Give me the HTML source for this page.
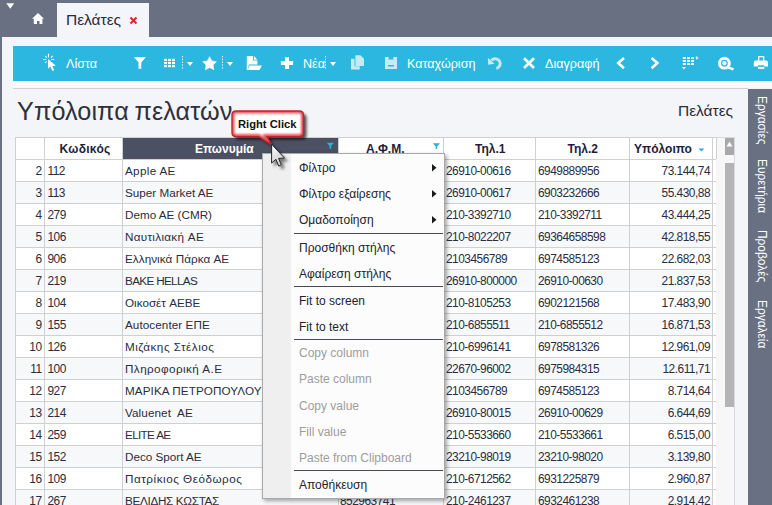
<!DOCTYPE html>
<html><head><meta charset="utf-8"><title>Πελάτες</title>
<style>
*{box-sizing:border-box}
html,body{margin:0;padding:0}
body{width:772px;height:505px;overflow:hidden;position:relative;background:#f4f5f8;font-family:"Liberation Sans",sans-serif;color:#2a2c3c}
.a{position:absolute}
.tb{color:#fff;font-size:12.6px;white-space:nowrap;line-height:15px}
.cell{position:absolute;font-size:11.7px;white-space:nowrap;line-height:14px;color:#2b2d3e}
.hd{position:absolute;font-size:12px;font-weight:bold;white-space:nowrap;line-height:14px;color:#1f1e3a}
.mi{position:absolute;left:299px;font-size:12px;white-space:nowrap;line-height:14px;color:#22232e}
.mi.dis{color:#9d9d9d}
.num{letter-spacing:-0.5px;font-size:11.9px}
.sep{position:absolute;left:294px;width:149px;height:1px;background:#4a4b52}
.side{position:absolute;left:756px;writing-mode:vertical-rl;font-size:11.9px;color:#fff;white-space:nowrap;line-height:11px}
</style></head><body>

<div class="a" style="left:0;top:0;width:772px;height:37px;background:#687082"></div>
<div class="a" style="left:0;top:37px;width:2px;height:468px;background:#687082"></div>
<svg class="a" style="left:5px;top:2px" width="11" height="8"><path d="M1.3 1.3 H9.2 L5.25 6.7 Z" fill="#fff"/></svg>
<svg class="a" style="left:31px;top:12px" width="14" height="13"><path d="M7 1 L1 6.8 H2.8 V12 H6 V9 H8.5 V12 H11.4 V6.8 H13 Z" fill="#fff"/></svg>
<div class="a" style="left:57px;top:3px;width:92px;height:35px;background:#f4f5f8"></div>
<div class="a" style="left:66px;top:11px;font-size:15.5px;line-height:17px;color:#2a2c3c">Πελάτες</div>
<svg class="a" style="left:129px;top:16px" width="9" height="9"><path d="M1.5 1.5 L7.5 7.5 M7.5 1.5 L1.5 7.5" stroke="#e0252b" stroke-width="2"/></svg>
<div class="a" style="left:13px;top:46px;width:759px;height:35px;background:#2bb7e0"></div>
<div class="a" style="left:13px;top:81px;width:759px;height:7px;background:#f9fafb"></div>
<div class="a" style="left:13px;top:88px;width:735px;height:1px;background:#cdd0d6"></div>
<svg class="a" style="left:0;top:0" width="772" height="90">
<g fill="#fff">
 <path d="M48 59 L48 68.8 L50.4 66.6 L52.3 71 L54.2 70.2 L52.4 65.9 L55.8 65.7 Z"/>
</g>
<g stroke="#fff" stroke-width="1.1" fill="none">
 <path d="M48.5 53.8 V57.4 M43 59.5 H46.2 M51 59.5 H54.2 M45.2 56 L46.8 57.6 M52.6 56 L51 57.6 M45.2 62.8 L46.6 61.4"/>
</g>
<path d="M133.9 56.9 H145.9 L141.3 62.5 V68.8 H138.5 V62.5 Z" fill="#fff"/>
<g fill="#fff">
 <rect x="164" y="58.8" width="3" height="2.2"/><rect x="168" y="58.8" width="3" height="2.2"/><rect x="172" y="58.8" width="3" height="2.2"/>
 <rect x="164" y="61.9" width="3" height="2.2"/><rect x="168" y="61.9" width="3" height="2.2"/><rect x="172" y="61.9" width="3" height="2.2"/>
 <rect x="164" y="65" width="3" height="2.2"/><rect x="168" y="65" width="3" height="2.2"/><rect x="172" y="65" width="3" height="2.2"/>
</g>
<g stroke="#fff" stroke-width="1" stroke-dasharray="1.4 1.4" opacity="0.9">
 <path d="M182.5 56 V70 M222.5 56 V70 M325.5 56 V70"/>
</g>
<g fill="#fff">
 <path d="M187 62 H193 L190 66 Z M227 62 H233 L230 66 Z M330 62 H336 L333 66 Z"/>
 <path d="M209.6 56.7 L211.8 60.9 L216.4 61.7 L213.1 65.0 L213.8 69.7 L209.6 67.6 L205.4 69.7 L206.1 65.0 L202.8 61.7 L207.4 60.9 Z" stroke="#fff" stroke-width="0.6" stroke-linejoin="round"/>
 <path d="M246.8 56 H253 V60.6 H257.4 V64.6 H249.2 L247.9 67.5 V70 H246.8 Z"/><path d="M253.9 56 L257.4 59.7 H253.9 Z"/>
 <path d="M249.6 65.6 H262 L259.4 70 H247.3 Z"/>
 <path d="M285.1 57 H289 V61 H293.1 V64.9 H289 V69 H285.1 V64.9 H280.9 V61 H285.1 Z"/>
</g>
<g fill="rgba(255,255,255,0.72)">
 <path d="M351 58.7 H354.5 V66.3 H359.7 V69.6 H351 Z"/>
 <path d="M355.4 55.3 H360.5 L364 58.8 V66.1 H355.4 Z"/>
 <path d="M385 57 H388.6 V59.6 H393.4 V57 H397 V69 H385 Z M388 65 V66.6 H394 V65 Z" fill-rule="evenodd"/>
</g>
<path d="M491.4 60.4 A5 5 0 1 1 496.4 68.5" stroke="rgba(255,255,255,0.72)" stroke-width="3" fill="none"/>
<path d="M487.8 57.8 L488.2 64.8 L494.6 63.8 Z" fill="rgba(255,255,255,0.72)"/>
<path d="M524 58.2 L534 68 M534 58.2 L524 68" stroke="#fff" stroke-width="2.7"/>
<path d="M624 58 L618.2 63.1 L624 68.2 M651.6 58 L657.4 63.1 L651.6 68.2" stroke="#fff" stroke-width="2.6" fill="none"/>
<g fill="#fff">
 <rect x="682.8" y="57" width="3" height="2"/><rect x="687" y="57" width="3" height="2"/><rect x="691" y="57" width="3" height="2"/>
 <rect x="682.8" y="60" width="3" height="2"/><rect x="687" y="60" width="3" height="2"/><rect x="691" y="60" width="3" height="2"/>
 <rect x="682.8" y="63" width="3" height="2"/><rect x="687" y="63" width="3" height="2"/><rect x="691" y="63" width="3" height="2"/>
 <path d="M681.9 67 H685.9 L683.9 69.4 Z M695.9 56 L698.6 57.9 L695.9 59.8 Z"/>
</g>
<circle cx="724.4" cy="63.2" r="4.9" stroke="#fff" stroke-width="3" fill="none"/>
<circle cx="724.4" cy="63.2" r="2.1" fill="#fff"/>
<path d="M728.2 67.3 L733.5 69.4" stroke="#fff" stroke-width="2.4"/>
<g fill="#fff">
 <path d="M758 56 H764.3 V61 H763 V57.3 H759.3 V61 H758 Z"/>
 <path d="M755.8 60.4 H766 Q768 60.4 768 62.4 V66.6 H764.3 V65.3 H758 V66.6 H753.8 V62.4 Q753.8 60.4 755.8 60.4 Z"/>
 <rect x="758" y="66.8" width="6.3" height="2.1"/>
</g>
</svg>
<div class="a tb" style="left:66px;top:57px">Λίστα</div>
<div class="a tb" style="left:303px;top:57px">Νέα</div>
<div class="a tb" style="left:407px;top:57px">Καταχώριση</div>
<div class="a tb" style="left:545px;top:57px">Διαγραφή</div>
<div class="a" style="left:17px;top:97px;font-size:25.2px;word-spacing:-1.5px;letter-spacing:0.1px;line-height:28px;color:#2e3040;white-space:nowrap">Υπόλοιπα πελατών</div>
<div class="a" style="left:678px;top:101.5px;font-size:15.5px;line-height:17px;color:#2a2c3c">Πελάτες</div>
<div class="a" style="left:748px;top:89px;width:24px;height:416px;background:#687082"></div>
<div class="side" style="top:96px">Εργασίες</div>
<div class="side" style="top:159px">Ευρετήρια</div>
<div class="side" style="top:230px">Προβολές</div>
<div class="side" style="top:300px">Εργαλεία</div>
<div class="a" style="left:15px;top:137px;width:701px;height:368px;background:#fff"></div>
<div class="a" style="left:16px;top:181px;width:696px;height:22px;background:#f7f8fa"></div>
<div class="a" style="left:16px;top:225px;width:696px;height:22px;background:#f7f8fa"></div>
<div class="a" style="left:16px;top:269px;width:696px;height:22px;background:#f7f8fa"></div>
<div class="a" style="left:16px;top:313px;width:696px;height:22px;background:#f7f8fa"></div>
<div class="a" style="left:16px;top:357px;width:696px;height:22px;background:#f7f8fa"></div>
<div class="a" style="left:16px;top:401px;width:696px;height:22px;background:#f7f8fa"></div>
<div class="a" style="left:16px;top:445px;width:696px;height:22px;background:#f7f8fa"></div>
<div class="a" style="left:16px;top:489px;width:696px;height:22px;background:#f7f8fa"></div>
<div class="a" style="left:122px;top:137px;width:216px;height:22px;background:#4b5063"></div>
<div class="a" style="left:15px;top:137px;width:697px;height:1px;background:#cfd0d2"></div>
<div class="a" style="left:712px;top:137px;width:4px;height:1px;background:#cfd0d2"></div>
<div class="a" style="left:15px;top:159px;width:697px;height:1px;background:#cfd0d2"></div>
<div class="a" style="left:712px;top:159px;width:4px;height:1px;background:#cfd0d2"></div>
<div class="a" style="left:15px;top:181px;width:697px;height:1px;background:#cfd0d2"></div>
<div class="a" style="left:712px;top:181px;width:4px;height:1px;background:#cfd0d2"></div>
<div class="a" style="left:15px;top:203px;width:697px;height:1px;background:#cfd0d2"></div>
<div class="a" style="left:712px;top:203px;width:4px;height:1px;background:#cfd0d2"></div>
<div class="a" style="left:15px;top:225px;width:697px;height:1px;background:#cfd0d2"></div>
<div class="a" style="left:712px;top:225px;width:4px;height:1px;background:#cfd0d2"></div>
<div class="a" style="left:15px;top:247px;width:697px;height:1px;background:#cfd0d2"></div>
<div class="a" style="left:712px;top:247px;width:4px;height:1px;background:#cfd0d2"></div>
<div class="a" style="left:15px;top:269px;width:697px;height:1px;background:#cfd0d2"></div>
<div class="a" style="left:712px;top:269px;width:4px;height:1px;background:#cfd0d2"></div>
<div class="a" style="left:15px;top:291px;width:697px;height:1px;background:#cfd0d2"></div>
<div class="a" style="left:712px;top:291px;width:4px;height:1px;background:#cfd0d2"></div>
<div class="a" style="left:15px;top:313px;width:697px;height:1px;background:#cfd0d2"></div>
<div class="a" style="left:712px;top:313px;width:4px;height:1px;background:#cfd0d2"></div>
<div class="a" style="left:15px;top:335px;width:697px;height:1px;background:#cfd0d2"></div>
<div class="a" style="left:712px;top:335px;width:4px;height:1px;background:#cfd0d2"></div>
<div class="a" style="left:15px;top:357px;width:697px;height:1px;background:#cfd0d2"></div>
<div class="a" style="left:712px;top:357px;width:4px;height:1px;background:#cfd0d2"></div>
<div class="a" style="left:15px;top:379px;width:697px;height:1px;background:#cfd0d2"></div>
<div class="a" style="left:712px;top:379px;width:4px;height:1px;background:#cfd0d2"></div>
<div class="a" style="left:15px;top:401px;width:697px;height:1px;background:#cfd0d2"></div>
<div class="a" style="left:712px;top:401px;width:4px;height:1px;background:#cfd0d2"></div>
<div class="a" style="left:15px;top:423px;width:697px;height:1px;background:#cfd0d2"></div>
<div class="a" style="left:712px;top:423px;width:4px;height:1px;background:#cfd0d2"></div>
<div class="a" style="left:15px;top:445px;width:697px;height:1px;background:#cfd0d2"></div>
<div class="a" style="left:712px;top:445px;width:4px;height:1px;background:#cfd0d2"></div>
<div class="a" style="left:15px;top:467px;width:697px;height:1px;background:#cfd0d2"></div>
<div class="a" style="left:712px;top:467px;width:4px;height:1px;background:#cfd0d2"></div>
<div class="a" style="left:15px;top:489px;width:697px;height:1px;background:#cfd0d2"></div>
<div class="a" style="left:712px;top:489px;width:4px;height:1px;background:#cfd0d2"></div>
<div class="a" style="left:15px;top:137px;width:1px;height:368px;background:#cfd0d2"></div>
<div class="a" style="left:44px;top:137px;width:1px;height:368px;background:#cfd0d2"></div>
<div class="a" style="left:122px;top:137px;width:1px;height:368px;background:#cfd0d2"></div>
<div class="a" style="left:338px;top:137px;width:1px;height:368px;background:#cfd0d2"></div>
<div class="a" style="left:443px;top:137px;width:1px;height:368px;background:#cfd0d2"></div>
<div class="a" style="left:535px;top:137px;width:1px;height:368px;background:#cfd0d2"></div>
<div class="a" style="left:629px;top:137px;width:1px;height:368px;background:#cfd0d2"></div>
<div class="a" style="left:712px;top:137px;width:1px;height:368px;background:#cfd0d2"></div>
<div class="a" style="left:716px;top:137px;width:1px;height:22px;background:#cfd0d2"></div>
<div class="hd" style="left:59.5px;top:142px;letter-spacing:0.3px">Κωδικός</div>
<div class="hd" style="left:195px;top:142px;color:#fff">Επωνυμία</div>
<div class="hd" style="left:366px;top:142px">Α.Φ.Μ.</div>
<div class="hd" style="left:475px;top:142px">Τηλ.1</div>
<div class="hd" style="left:567.5px;top:142px">Τηλ.2</div>
<div class="hd" style="left:634px;top:142px">Υπόλοιπο</div>
<div class="cell num" style="right:730.5px;top:164px">2</div>
<div class="cell num" style="left:47.5px;top:164px">112</div>
<div class="cell" style="left:125px;top:164px;letter-spacing:0.314px">Apple AE</div>
<div class="cell num" style="left:446px;top:164px">26910-00616</div>
<div class="cell num" style="left:538px;top:164px">6949889956</div>
<div class="cell num" style="right:62px;top:164px">73.144,74</div>
<div class="cell num" style="right:730.5px;top:186px">3</div>
<div class="cell num" style="left:47.5px;top:186px">113</div>
<div class="cell" style="left:125px;top:186px;letter-spacing:0px">Super Market AE</div>
<div class="cell num" style="left:446px;top:186px">26910-00617</div>
<div class="cell num" style="left:538px;top:186px">6903232666</div>
<div class="cell num" style="right:62px;top:186px">55.430,88</div>
<div class="cell num" style="right:730.5px;top:208px">4</div>
<div class="cell num" style="left:47.5px;top:208px">279</div>
<div class="cell" style="left:125px;top:208px;letter-spacing:0px">Demo AE (CMR)</div>
<div class="cell num" style="left:446px;top:208px">210-3392710</div>
<div class="cell num" style="left:538px;top:208px">210-3392711</div>
<div class="cell num" style="right:62px;top:208px">43.444,25</div>
<div class="cell num" style="right:730.5px;top:230px">5</div>
<div class="cell num" style="left:47.5px;top:230px">106</div>
<div class="cell" style="left:125px;top:230px;letter-spacing:0.292px">Ναυτιλιακή AE</div>
<div class="cell num" style="left:446px;top:230px">210-8022207</div>
<div class="cell num" style="left:538px;top:230px">69364658598</div>
<div class="cell num" style="right:62px;top:230px">42.818,55</div>
<div class="cell num" style="right:730.5px;top:252px">6</div>
<div class="cell num" style="left:47.5px;top:252px">906</div>
<div class="cell" style="left:125px;top:252px;letter-spacing:0.056px">Ελληνικά Πάρκα AE</div>
<div class="cell num" style="left:446px;top:252px">2103456789</div>
<div class="cell num" style="left:538px;top:252px">6974585123</div>
<div class="cell num" style="right:62px;top:252px">22.682,03</div>
<div class="cell num" style="right:730.5px;top:274px">7</div>
<div class="cell num" style="left:47.5px;top:274px">219</div>
<div class="cell" style="left:125px;top:274px;letter-spacing:-0.65px">BAKE HELLAS</div>
<div class="cell num" style="left:446px;top:274px">26910-800000</div>
<div class="cell num" style="left:538px;top:274px">26910-00630</div>
<div class="cell num" style="right:62px;top:274px">21.837,53</div>
<div class="cell num" style="right:730.5px;top:296px">8</div>
<div class="cell num" style="left:47.5px;top:296px">104</div>
<div class="cell" style="left:125px;top:296px;letter-spacing:0px">Οικοσέτ AEBE</div>
<div class="cell num" style="left:446px;top:296px">210-8105253</div>
<div class="cell num" style="left:538px;top:296px">6902121568</div>
<div class="cell num" style="right:62px;top:296px">17.483,90</div>
<div class="cell num" style="right:730.5px;top:318px">9</div>
<div class="cell num" style="left:47.5px;top:318px">155</div>
<div class="cell" style="left:125px;top:318px;letter-spacing:0.077px">Autocenter ΕΠΕ</div>
<div class="cell num" style="left:446px;top:318px">210-6855511</div>
<div class="cell num" style="left:538px;top:318px">210-6855512</div>
<div class="cell num" style="right:62px;top:318px">16.871,53</div>
<div class="cell num" style="right:730.5px;top:340px">10</div>
<div class="cell num" style="left:47.5px;top:340px">126</div>
<div class="cell" style="left:125px;top:340px;letter-spacing:0.514px">Μιζάκης Στέλιος</div>
<div class="cell num" style="left:446px;top:340px">210-6996141</div>
<div class="cell num" style="left:538px;top:340px">6978581326</div>
<div class="cell num" style="right:62px;top:340px">12.961,09</div>
<div class="cell num" style="right:730.5px;top:362px">11</div>
<div class="cell num" style="left:47.5px;top:362px">100</div>
<div class="cell" style="left:125px;top:362px;letter-spacing:0.421px">Πληροφορική Α.Ε</div>
<div class="cell num" style="left:446px;top:362px">22670-96002</div>
<div class="cell num" style="left:538px;top:362px">6975984315</div>
<div class="cell num" style="right:62px;top:362px">12.611,71</div>
<div class="cell num" style="right:730.5px;top:384px">12</div>
<div class="cell num" style="left:47.5px;top:384px">927</div>
<div class="cell" style="left:125px;top:384px;letter-spacing:0.076px">ΜΑΡΙΚΑ ΠΕΤΡΟΠΟΥΛΟΥ</div>
<div class="cell num" style="left:446px;top:384px">2103456789</div>
<div class="cell num" style="left:538px;top:384px">6974585123</div>
<div class="cell num" style="right:62px;top:384px">8.714,64</div>
<div class="cell num" style="right:730.5px;top:406px">13</div>
<div class="cell num" style="left:47.5px;top:406px">214</div>
<div class="cell" style="left:125px;top:406px;letter-spacing:0.091px">Valuenet&nbsp; AE</div>
<div class="cell num" style="left:446px;top:406px">26910-80015</div>
<div class="cell num" style="left:538px;top:406px">26910-00629</div>
<div class="cell num" style="right:62px;top:406px">6.644,69</div>
<div class="cell num" style="right:730.5px;top:428px">14</div>
<div class="cell num" style="left:47.5px;top:428px">259</div>
<div class="cell" style="left:125px;top:428px;letter-spacing:-0.657px">ELITE AE</div>
<div class="cell num" style="left:446px;top:428px">210-5533660</div>
<div class="cell num" style="left:538px;top:428px">210-5533661</div>
<div class="cell num" style="right:62px;top:428px">6.515,00</div>
<div class="cell num" style="right:730.5px;top:450px">15</div>
<div class="cell num" style="left:47.5px;top:450px">152</div>
<div class="cell" style="left:125px;top:450px;letter-spacing:0px">Deco Sport AE</div>
<div class="cell num" style="left:446px;top:450px">23210-98019</div>
<div class="cell num" style="left:538px;top:450px">23210-98020</div>
<div class="cell num" style="right:62px;top:450px">3.139,80</div>
<div class="cell num" style="right:730.5px;top:472px">16</div>
<div class="cell num" style="left:47.5px;top:472px">109</div>
<div class="cell" style="left:125px;top:472px;letter-spacing:0.518px">Πατρίκιος Θεόδωρος</div>
<div class="cell num" style="left:446px;top:472px">210-6712562</div>
<div class="cell num" style="left:538px;top:472px">6931225879</div>
<div class="cell num" style="right:62px;top:472px">2.960,87</div>
<div class="cell num" style="right:730.5px;top:494px">17</div>
<div class="cell num" style="left:47.5px;top:494px">267</div>
<div class="cell" style="left:125px;top:494px;letter-spacing:-0.315px">ΒΕΛΙΔΗΣ ΚΩΣΤΑΣ</div>
<div class="cell num" style="left:340px;top:494px">852963741</div>
<div class="cell num" style="left:446px;top:494px">210-2461237</div>
<div class="cell num" style="left:538px;top:494px">6932461238</div>
<div class="cell num" style="right:62px;top:494px">2.914,42</div>
<div class="a" style="left:717px;top:137px;width:18px;height:368px;background:#f7f7f7"></div>
<div class="a" style="left:734px;top:137px;width:1px;height:368px;background:#d9dadd"></div>
<div class="a" style="left:716px;top:137px;width:19px;height:1px;background:#d9dadd"></div>
<div class="a" style="left:725px;top:138px;width:9px;height:17px;background:#a9a9a9"></div>
<div class="a" style="left:725px;top:163px;width:9px;height:244px;background:#b4b4b4"></div>
<div class="a" style="left:262px;top:153px;width:183px;height:346px;background:#fcfcfc;border:1px solid #a9a9a9;box-shadow:2px 2px 4px rgba(0,0,0,0.35)"></div>
<div class="a" style="left:263px;top:154px;width:28px;height:344px;background:#efefef"></div>
<div class="mi" style="top:161px">Φίλτρο</div>
<svg class="a" style="left:432px;top:164px" width="6" height="9"><path d="M0 0 L4.5 3.75 L0 7.5 Z" fill="#1b1b1b"/></svg>
<div class="mi" style="top:187px">Φίλτρο εξαίρεσης</div>
<svg class="a" style="left:432px;top:190px" width="6" height="9"><path d="M0 0 L4.5 3.75 L0 7.5 Z" fill="#1b1b1b"/></svg>
<div class="mi" style="top:213px">Ομαδοποίηση</div>
<svg class="a" style="left:432px;top:216px" width="6" height="9"><path d="M0 0 L4.5 3.75 L0 7.5 Z" fill="#1b1b1b"/></svg>
<div class="mi" style="top:241px">Προσθήκη στήλης</div>
<div class="mi" style="top:267px">Αφαίρεση στήλης</div>
<div class="mi" style="top:294px">Fit to screen</div>
<div class="mi" style="top:320px">Fit to text</div>
<div class="mi dis" style="top:346px">Copy column</div>
<div class="mi dis" style="top:372px">Paste column</div>
<div class="mi dis" style="top:399px">Copy value</div>
<div class="mi dis" style="top:425px">Fill value</div>
<div class="mi dis" style="top:451px">Paste from Clipboard</div>
<div class="mi" style="top:478px">Αποθήκευση</div>
<div class="sep" style="top:233px"></div>
<div class="sep" style="top:286px"></div>
<div class="sep" style="top:339px"></div>
<div class="sep" style="top:470px"></div>
<svg class="a" style="left:0;top:0" width="772" height="160"><g fill="#2bb0dc"><path d="M326.7 142.7 H334 L331.2 146 V148.8 H329.5 V146 Z"/><path d="M432.9 143.3 H440 L437.2 146.5 V149.1 H435.7 V146.5 Z"/><path d="M698.4 148.5 H704.4 L701.4 151.6 Z"/></g><path d="M726.5 146.5 L729.5 141.8 L732.5 146.5 Z" fill="#fff"/></svg>
<svg class="a" style="left:222px;top:104px;overflow:visible" width="95" height="50">
<defs><filter id="sh" x="-20%" y="-20%" width="150%" height="160%"><feGaussianBlur in="SourceAlpha" stdDeviation="1.5"/><feOffset dx="2.5" dy="2.5"/><feComponentTransfer><feFuncA type="linear" slope="0.7"/></feComponentTransfer></filter>
<filter id="gl" x="-20%" y="-20%" width="140%" height="140%"><feGaussianBlur stdDeviation="1"/></filter>
<clipPath id="cp"><path d="M14 7 H77.5 Q81.5 7 81.5 11 V28.6 Q81.5 32.6 77.5 32.6 H45 L49.7 40.8 L36.6 32.6 H14 Q10 32.6 10 28.6 V11 Q10 7 14 7 Z"/></clipPath></defs>
<path d="M14 7 H77.5 Q81.5 7 81.5 11 V28.6 Q81.5 32.6 77.5 32.6 H45 L49.7 40.8 L36.6 32.6 H14 Q10 32.6 10 28.6 V11 Q10 7 14 7 Z" fill="#000" filter="url(#sh)"/>
<path d="M14 7 H77.5 Q81.5 7 81.5 11 V28.6 Q81.5 32.6 77.5 32.6 H45 L49.7 40.8 L36.6 32.6 H14 Q10 32.6 10 28.6 V11 Q10 7 14 7 Z" fill="#fff"/>
<g clip-path="url(#cp)"><path d="M14 7 H77.5 Q81.5 7 81.5 11 V28.6 Q81.5 32.6 77.5 32.6 H45 L49.7 40.8 L36.6 32.6 H14 Q10 32.6 10 28.6 V11 Q10 7 14 7 Z" fill="none" stroke="#e8525c" stroke-width="5" filter="url(#gl)"/></g>
<path d="M14 7 H77.5 Q81.5 7 81.5 11 V28.6 Q81.5 32.6 77.5 32.6 H45 L49.7 40.8 L36.6 32.6 H14 Q10 32.6 10 28.6 V11 Q10 7 14 7 Z" fill="none" stroke="#c3232d" stroke-width="1.4"/>
</svg>
<div class="a" style="left:238px;top:117px;font-size:11.2px;font-weight:bold;line-height:14px;color:#111;white-space:nowrap">Right Click</div>
<svg class="a" style="left:266px;top:140px;overflow:visible" width="30" height="34">
<defs><filter id="csh" x="-50%" y="-50%" width="200%" height="200%"><feGaussianBlur in="SourceAlpha" stdDeviation="1.8"/><feOffset dx="2.5" dy="2.5"/><feComponentTransfer><feFuncA type="linear" slope="0.5"/></feComponentTransfer><feMerge><feMergeNode/><feMergeNode in="SourceGraphic"/></feMerge></filter></defs>
<linearGradient id="cg" x1="0" y1="0" x2="0.4" y2="1"><stop offset="0" stop-color="#fdfdfd"/><stop offset="1" stop-color="#cfcfcf"/></linearGradient>
<path filter="url(#csh)" d="M5.6 4.2 V23.1 L9.9 19.3 L12.7 26 L15.3 24.8 L12.6 18.4 L18.5 18.1 Z" fill="url(#cg)" stroke="#262626" stroke-width="1" stroke-linejoin="round"/>
</svg>
</body></html>
